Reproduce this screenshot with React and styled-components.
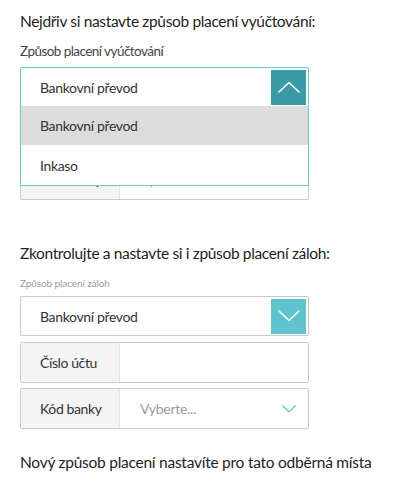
import React from "react";
import styled, { createGlobalStyle } from "styled-components";

const Global = createGlobalStyle`
  html, body { margin: 0; padding: 0; background: #fff; }
  body { font-family: "Lato", "Noto Sans", sans-serif; color: #222; }
`;

const Page = styled.div`
  width: 407px;
  padding: 10px 20px 0 20px;
  box-sizing: border-box;
`;

const Section = styled.section`
  display: flex;
  flex-direction: column;
  width: 289px;
`;

const Heading = styled.h2`
  margin: 0;
  font-size: 15.5px;
  font-weight: 400;
  line-height: 22px;
  letter-spacing: -0.35px;
  white-space: nowrap;
  color: #1e1e1e;
`;

const Label = styled.div`
  font-size: ${(p) => (p.$small ? "10px" : "13.5px")};
  color: ${(p) => (p.$small ? "#9a9a9a" : "#444")};
  letter-spacing: ${(p) => (p.$small ? "-0.1px" : "-0.55px")};
  line-height: ${(p) => (p.$small ? "14px" : "18px")};
  margin: ${(p) => (p.$small ? "12px 0 6px" : "10px 0 7px")};
  white-space: nowrap;
`;

const SelectWrap = styled.div`
  position: relative;
  margin-bottom: 6px;
`;

const SelectBox = styled.div`
  height: 40px;
  box-sizing: border-box;
  border: 1.5px solid ${(p) => (p.$open ? "#6ec9ce" : "#c9c9c9")};
  border-radius: 2px;
  display: flex;
  align-items: center;
  justify-content: space-between;
  padding: 0 2px 0 19px;
  background: #fff;
  font-size: 14px;
  letter-spacing: -0.35px;
  color: #333;
`;

const ArrowBtn = styled.div`
  width: 35px;
  height: 35px;
  background: ${(p) => (p.$open ? "#3a9aa5" : "#5ec3cc")};
  display: flex;
  align-items: center;
  justify-content: center;
`;

const Menu = styled.ul`
  position: absolute;
  left: 0;
  right: 0;
  top: 39px;
  margin: 0;
  padding: 0;
  list-style: none;
  background: #fff;
  border: 1.5px solid #6ec9ce;
  border-top: none;
  z-index: 2;
`;

const Option = styled.li`
  height: ${(p) => (p.$first ? "39px" : "40px")};
  display: flex;
  align-items: center;
  padding-left: 19px;
  font-size: 14px;
  letter-spacing: -0.35px;
  color: #333;
  background: ${(p) => (p.$active ? "#dcdcdc" : "#fff")};
`;

const FieldRow = styled.div`
  height: 41px;
  box-sizing: border-box;
  border: 1.5px solid #c9c9c9;
  border-radius: 2px;
  display: flex;
  margin-bottom: 5px;
  overflow: hidden;
`;

const FieldLabel = styled.div`
  width: 99px;
  flex: none;
  background: #f4f4f4;
  border-right: 1px solid #e6e6e6;
  display: flex;
  align-items: center;
  padding-left: 19px;
  box-sizing: border-box;
  font-size: 14px;
  letter-spacing: -0.4px;
  color: #333;
`;

const FieldValue = styled.div`
  flex: 1;
  display: flex;
  align-items: center;
  justify-content: space-between;
  padding: 0 12px 0 20px;
  font-size: 14px;
  letter-spacing: -0.3px;
  color: #9a9a9a;
`;

const Footer = styled.p`
  margin: 17px 0 0;
  font-size: 15.5px;
  line-height: 22px;
  letter-spacing: -0.25px;
  white-space: nowrap;
  color: #1e1e1e;
`;

const Chevron = ({ up, color = "#fff", w = 22, h = 12, sw = 1.6 }) => (
  <svg width={w} height={h} viewBox="0 0 22 12" fill="none">
    <path
      d={up ? "M1 11 L11 1.5 L21 11" : "M1 1 L11 10.5 L21 1"}
      stroke={color}
      strokeWidth={sw}
      strokeLinecap="round"
      strokeLinejoin="round"
    />
  </svg>
);

const AccountFields = () => (
  <>
    <FieldRow>
      <FieldLabel>Číslo účtu</FieldLabel>
      <FieldValue />
    </FieldRow>
    <FieldRow>
      <FieldLabel>Kód banky</FieldLabel>
      <FieldValue>
        Vyberte...
        <Chevron color="#5ec3cc" w={14} h={8} sw={2} />
      </FieldValue>
    </FieldRow>
  </>
);

export default function App() {
  return (
    <Page>
      <Global />
      <Section>
        <Heading>Nejdřiv si nastavte způsob placení vyúčtování:</Heading>
        <Label>Způsob placení vyúčtování</Label>
        <SelectWrap>
          <SelectBox $open>
            Bankovní převod
            <ArrowBtn $open>
              <Chevron up />
            </ArrowBtn>
          </SelectBox>
          <Menu>
            <Option $active $first>Bankovní převod</Option>
            <Option>Inkaso</Option>
          </Menu>
        </SelectWrap>
        <AccountFields />
      </Section>
      <Section style={{ marginTop: 37 }}>
        <Heading>Zkontrolujte a nastavte si i způsob placení záloh:</Heading>
        <Label $small>Způsob placení záloh</Label>
        <SelectWrap>
          <SelectBox>
            Bankovní převod
            <ArrowBtn>
              <Chevron />
            </ArrowBtn>
          </SelectBox>
        </SelectWrap>
        <AccountFields />
      </Section>
      <Footer>Nový způsob placení nastavíte pro tato odběrná místa</Footer>
    </Page>
  );
}
